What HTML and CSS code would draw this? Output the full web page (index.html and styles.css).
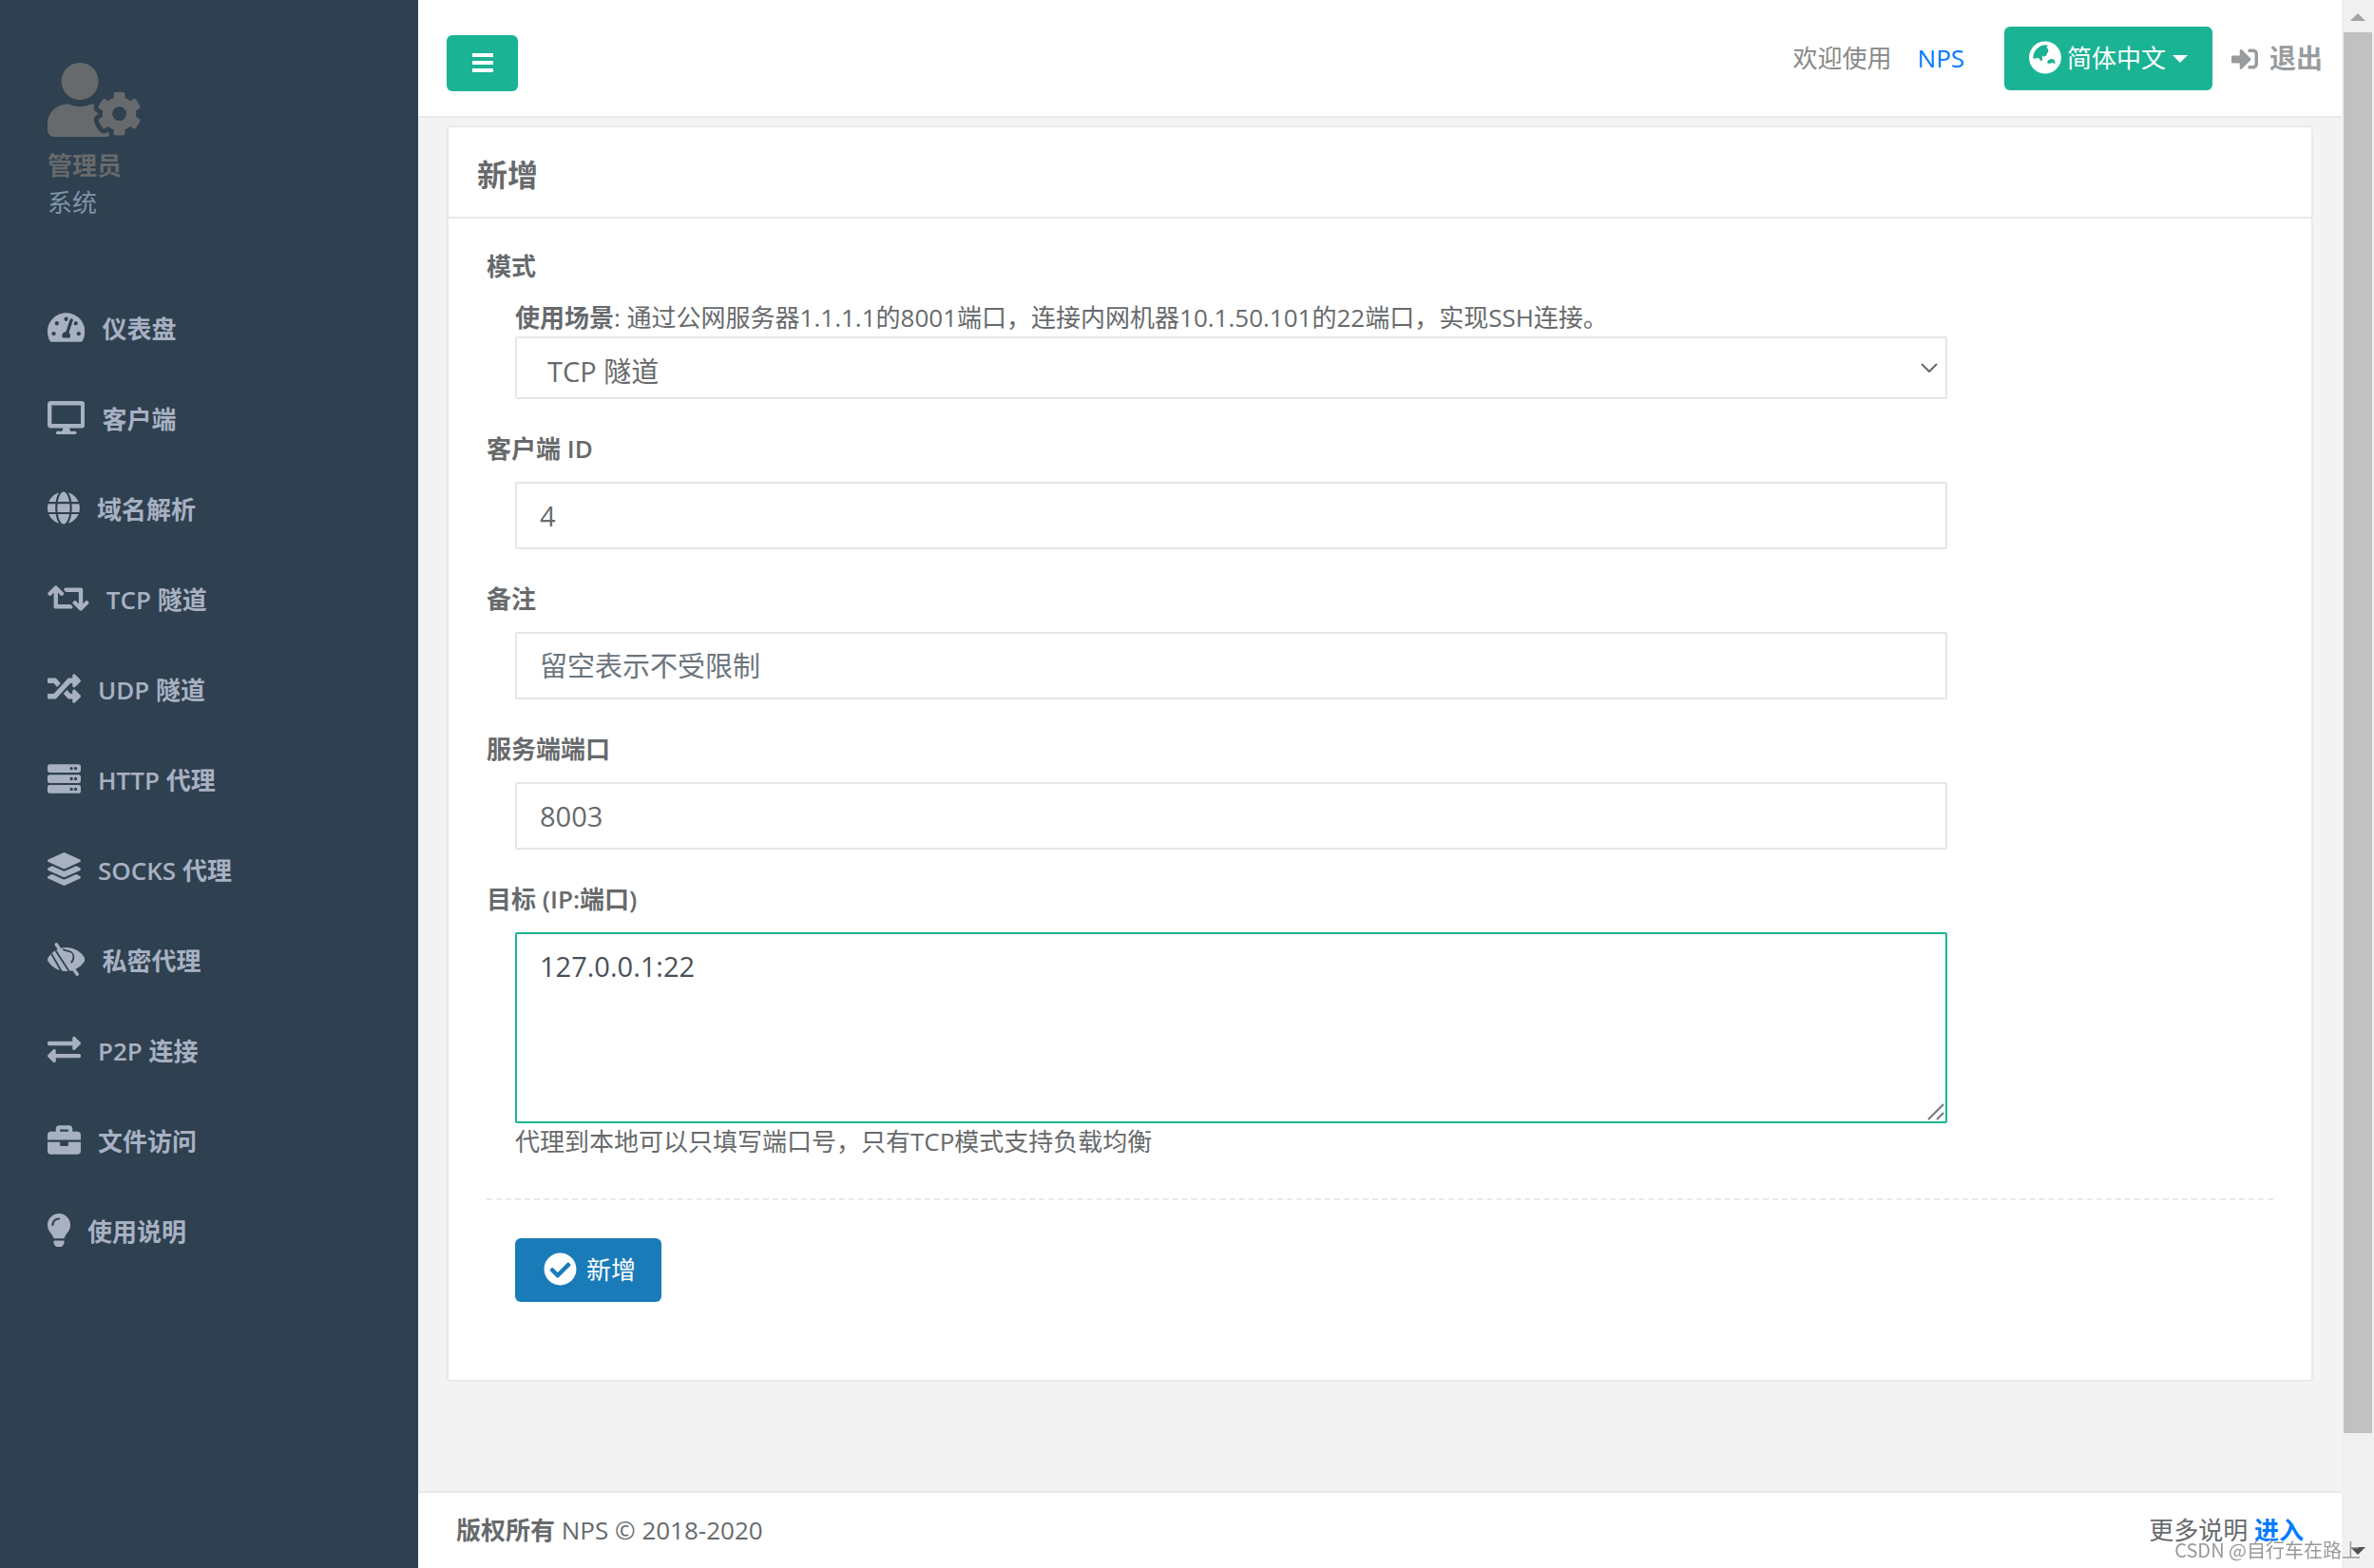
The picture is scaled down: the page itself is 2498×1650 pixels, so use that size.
FILE: index.html
```html
<!DOCTYPE html>
<html lang="zh-CN">
<head>
<meta charset="utf-8">
<meta name="viewport" content="width=device-width, initial-scale=1">
<title>NPS</title>
<link rel="stylesheet" href="styles.css">
</head>
<body>
<div class="app">
  <nav class="sidebar" aria-label="主菜单">
    <div class="profile">
      <svg class="avatar" viewBox="0 0 640 512" aria-hidden="true"><path d="M610.5 373.3c2.6-14.1 2.6-28.5 0-42.6l25.8-14.9c3-1.7 4.3-5.2 3.3-8.5-6.7-21.6-18.2-41.2-33.2-57.4-2.3-2.5-6-3.1-9-1.4l-25.8 14.9c-10.9-9.3-23.4-16.5-36.9-21.3v-29.8c0-3.4-2.4-6.4-5.7-7.1-22.3-5-45-4.8-66.2 0-3.3.7-5.7 3.7-5.7 7.1v29.8c-13.5 4.8-26 12-36.9 21.3l-25.8-14.9c-2.9-1.7-6.7-1.1-9 1.4-15 16.2-26.5 35.8-33.2 57.4-1 3.3.4 6.8 3.3 8.5l25.8 14.9c-2.6 14.1-2.6 28.5 0 42.6l-25.8 14.9c-3 1.7-4.3 5.2-3.3 8.5 6.7 21.6 18.2 41.1 33.2 57.4 2.3 2.5 6 3.1 9 1.4l25.8-14.9c10.9 9.3 23.4 16.5 36.9 21.3v29.8c0 3.4 2.4 6.4 5.7 7.1 22.3 5 45 4.8 66.2 0 3.3-.7 5.7-3.7 5.7-7.1v-29.8c13.5-4.8 26-12 36.9-21.3l25.8 14.9c2.9 1.7 6.7 1.1 9-1.4 15-16.2 26.5-35.8 33.2-57.4 1-3.3-.4-6.8-3.3-8.5l-25.8-14.9zM496 400.5c-26.8 0-48.5-21.8-48.5-48.5s21.8-48.5 48.5-48.5 48.5 21.8 48.5 48.5-21.7 48.5-48.5 48.5zM224 256c70.7 0 128-57.3 128-128S294.7 0 224 0 96 57.3 96 128s57.3 128 128 128zm201.2 226.5c-2.3-1.2-4.6-2.6-6.8-3.9l-7.9 4.6c-6 3.4-12.8 5.3-19.6 5.3-10.9 0-21.4-4.6-28.9-12.6-18.3-19.8-32.3-43.9-40.2-69.6-5.5-17.7 1.9-36.4 17.9-45.7l7.9-4.6c-.1-2.6-.1-5.2 0-7.8l-7.9-4.6c-16-9.2-23.4-28-17.9-45.7.9-2.9 2.2-5.8 3.2-8.7-3.8-.3-7.5-1.2-11.4-1.2h-16.7c-22.2 10.2-46.9 16-72.9 16s-50.6-5.8-72.9-16h-16.7C60.2 288 0 348.2 0 422.4V464c0 26.5 21.5 48 48 48h352c10.1 0 19.5-3.2 27.2-8.5-1.2-3.8-2-7.7-2-11.8v-9.2z"/></svg>
      <strong class="profile-name">管理员</strong>
      <span class="profile-role">系统</span>
    </div>
    <ul class="menu">
      <li><a href="#dashboard"><svg viewBox="0 0 576 512" aria-hidden="true"><path d="M288 32C128.94 32 0 160.94 0 320c0 52.8 14.25 102.26 39.06 144.8 5.61 9.62 16.3 15.2 27.44 15.2h443c11.14 0 21.83-5.58 27.44-15.2C561.75 422.26 576 372.8 576 320c0-159.06-128.94-288-288-288zm0 64c14.71 0 26.58 10.13 30.32 23.65-1.11 2.26-2.64 4.23-3.45 6.67l-9.22 27.67c-5.13 3.49-10.97 6.01-17.64 6.01-17.67 0-32-14.33-32-32S270.33 96 288 96zM96 384c-17.67 0-32-14.33-32-32s14.33-32 32-32 32 14.33 32 32-14.33 32-32 32zm48-160c-17.67 0-32-14.33-32-32s14.33-32 32-32 32 14.33 32 32-14.33 32-32 32zm246.77-72.41l-61.33 184C343.13 347.33 352 364.54 352 384c0 11.72-3.38 22.55-8.88 32H232.88c-5.5-9.45-8.88-20.28-8.88-32 0-33.94 26.5-61.43 59.9-63.59l61.34-184.01c4.17-12.56 17.73-19.45 30.36-15.17 12.57 4.19 19.35 17.79 15.17 30.36zm14.66 57.2l15.52-46.55c3.47-1.29 7.13-2.23 11.05-2.23 17.67 0 32 14.33 32 32s-14.33 32-32 32c-11.38-.01-20.89-6.28-26.57-15.22zM480 384c-17.67 0-32-14.33-32-32s14.33-32 32-32 32 14.33 32 32-14.33 32-32 32z"/></svg><span>仪表盘</span></a></li>
      <li><a href="#client"><svg viewBox="0 0 576 512" aria-hidden="true"><path d="M528 0H48C21.5 0 0 21.5 0 48v320c0 26.5 21.5 48 48 48h192l-16 48h-72c-13.3 0-24 10.7-24 24s10.7 24 24 24h272c13.3 0 24-10.7 24-24s-10.7-24-24-24h-72l-16-48h192c26.5 0 48-21.5 48-48V48c0-26.5-21.5-48-48-48zm-16 352H64V64h448v288z"/></svg><span>客户端</span></a></li>
      <li><a href="#host"><svg viewBox="0 0 496 512" aria-hidden="true"><path d="M336.5 160C322 70.7 287.8 8 248 8s-74 62.7-88.5 152h177zM152 256c0 22.2 1.2 43.5 3.3 64h185.3c2.1-20.5 3.3-41.8 3.3-64s-1.2-43.5-3.3-64H155.3c-2.1 20.5-3.3 41.8-3.3 64zm324.7-96c-28.6-67.9-86.5-120.4-158-141.6 24.4 33.8 41.2 84.7 50 141.6h108zM177.2 18.4C105.8 39.6 47.8 92.1 19.3 160h108c8.7-56.9 25.5-107.8 49.9-141.6zM487.4 192H372.7c2.1 21 3.3 42.5 3.3 64s-1.2 43-3.3 64h114.6c5.5-20.5 8.6-41.8 8.6-64s-3.1-43.5-8.5-64zM120 256c0-21.5 1.2-43 3.3-64H8.6C3.2 212.5 0 233.8 0 256s3.2 43.5 8.6 64h114.6c-2-21-3.2-42.5-3.2-64zm39.5 96c14.5 89.3 48.7 152 88.5 152s74-62.7 88.5-152h-177zm159.3 141.6c71.4-21.2 129.4-73.7 158-141.6h-108c-8.8 56.9-25.6 107.8-50 141.6zM19.3 352c28.6 67.9 86.5 120.4 158 141.6-24.4-33.8-41.2-84.7-50-141.6h-108z"/></svg><span>域名解析</span></a></li>
      <li><a href="#tcp"><svg viewBox="0 0 640 512" aria-hidden="true"><path d="M629.657 343.598L528.971 444.284c-9.373 9.372-24.568 9.372-33.941 0L394.343 343.598c-9.373-9.373-9.373-24.569 0-33.941l10.823-10.823c9.562-9.562 25.133-9.34 34.419.492L480 342.118V160H292.451a24.005 24.005 0 0 1-16.971-7.029l-16-16C244.361 121.851 255.069 96 276.451 96H520c13.255 0 24 10.745 24 24v222.118l40.416-42.792c9.285-9.831 24.856-10.054 34.419-.492l10.823 10.823c9.372 9.372 9.372 24.569-.001 33.941zm-265.138 15.431A23.999 23.999 0 0 0 347.548 352H160V169.881l40.416 42.792c9.286 9.831 24.856 10.054 34.419.491l10.822-10.822c9.373-9.373 9.373-24.569 0-33.941L144.971 67.716c-9.373-9.373-24.569-9.373-33.941 0L10.343 168.402c-9.373 9.373-9.373 24.569 0 33.941l10.822 10.822c9.562 9.562 25.133 9.34 34.419-.491L96 169.882V392c0 13.255 10.745 24 24 24h243.549c21.382 0 32.09-25.851 16.971-40.971l-16.001-16z"/></svg><span>TCP 隧道</span></a></li>
      <li><a href="#udp"><svg viewBox="0 0 512 512" aria-hidden="true"><path d="M504.971 359.029c9.373 9.373 9.373 24.569 0 33.941l-80 79.984c-15.01 15.01-40.971 4.49-40.971-16.971V416h-58.785a12.004 12.004 0 0 1-8.773-3.812l-70.556-75.596 53.333-57.143L352 336h32v-39.981c0-21.438 25.943-31.998 40.971-16.971l80 79.981zM12 176h84l52.781 56.551 53.333-57.143-70.556-75.596A11.999 11.999 0 0 0 122.785 96H12c-6.627 0-12 5.373-12 12v56c0 6.627 5.373 12 12 12zm372 0v39.984c0 21.46 25.961 31.98 40.971 16.971l80-79.984c9.373-9.373 9.373-24.569 0-33.941l-80-79.981C409.943 24.021 384 34.582 384 56.019V96h-58.785a12.004 12.004 0 0 0-8.773 3.812L96 336H12c-6.627 0-12 5.373-12 12v56c0 6.627 5.373 12 12 12h110.785c3.326 0 6.503-1.381 8.773-3.812L352 176h32z"/></svg><span>UDP 隧道</span></a></li>
      <li><a href="#http"><svg viewBox="0 0 512 512" aria-hidden="true"><path d="M480 160H32c-17.673 0-32-14.327-32-32V64c0-17.673 14.327-32 32-32h448c17.673 0 32 14.327 32 32v64c0 17.673-14.327 32-32 32zm-48-88c-13.255 0-24 10.745-24 24s10.745 24 24 24 24-10.745 24-24-10.745-24-24-24zm-64 0c-13.255 0-24 10.745-24 24s10.745 24 24 24 24-10.745 24-24-10.745-24-24-24zm112 248H32c-17.673 0-32-14.327-32-32v-64c0-17.673 14.327-32 32-32h448c17.673 0 32 14.327 32 32v64c0 17.673-14.327 32-32 32zm-48-88c-13.255 0-24 10.745-24 24s10.745 24 24 24 24-10.745 24-24-10.745-24-24-24zm-64 0c-13.255 0-24 10.745-24 24s10.745 24 24 24 24-10.745 24-24-10.745-24-24-24zm112 248H32c-17.673 0-32-14.327-32-32v-64c0-17.673 14.327-32 32-32h448c17.673 0 32 14.327 32 32v64c0 17.673-14.327 32-32 32zm-48-88c-13.255 0-24 10.745-24 24s10.745 24 24 24 24-10.745 24-24-10.745-24-24-24zm-64 0c-13.255 0-24 10.745-24 24s10.745 24 24 24 24-10.745 24-24-10.745-24-24-24z"/></svg><span>HTTP 代理</span></a></li>
      <li><a href="#socks"><svg viewBox="0 0 512 512" aria-hidden="true"><path d="M12.41 148.02l232.94 105.67c6.8 3.09 14.49 3.09 21.29 0l232.94-105.67c16.55-7.51 16.55-32.52 0-40.03L266.65 2.31a25.607 25.607 0 0 0-21.29 0L12.41 107.98c-16.55 7.51-16.55 32.53 0 40.04zm487.18 88.28l-58.09-26.33-161.64 73.27c-7.56 3.43-15.59 5.17-23.86 5.17s-16.29-1.74-23.86-5.17L70.51 209.97l-58.1 26.33c-16.55 7.5-16.55 32.5 0 40l232.94 105.59c6.8 3.08 14.49 3.08 21.29 0L499.59 276.3c16.55-7.5 16.55-32.5 0-40zm0 127.8l-57.87-26.23-161.86 73.37c-7.56 3.43-15.59 5.17-23.86 5.17s-16.29-1.74-23.86-5.17L70.29 337.87 12.41 364.1c-16.55 7.5-16.55 32.5 0 40l232.94 105.59c6.8 3.08 14.49 3.08 21.29 0L499.59 404.1c16.55-7.5 16.55-32.5 0-40z"/></svg><span>SOCKS 代理</span></a></li>
      <li><a href="#secret"><svg viewBox="0 0 576 512" aria-hidden="true"><path d="M6 238C70 132 170 72 288 72s225 60 282 160c8 15 8 33 0 48-58 100-164 160-282 160S64 380 6 280c-8-14-8-28 0-42z"/><g class="cut"><path d="M60 170l165 290M125 120l220 340M235 105c80 30 150 20 165 100 5 50-15 85-45 110"/></g><circle cx="342" cy="196" r="42"/><g class="bar"><path d="M135 26l322 460"/></g></svg><span>私密代理</span></a></li>
      <li><a href="#p2p"><svg viewBox="0 0 512 512" aria-hidden="true"><path d="M0 168v-16c0-13.255 10.745-24 24-24h360V80c0-21.367 25.899-32.042 40.971-16.971l80 80c9.372 9.373 9.372 24.569 0 33.941l-80 80C409.956 271.982 384 261.456 384 240v-48H24c-13.255 0-24-10.745-24-24zm488 152H128v-48c0-21.314-25.862-32.08-40.971-16.971l-80 80c-9.372 9.373-9.372 24.569 0 33.941l80 80C102.057 463.997 128 453.437 128 432v-48h360c13.255 0 24-10.745 24-24v-16c0-13.255-10.745-24-24-24z"/></svg><span>P2P 连接</span></a></li>
      <li><a href="#file"><svg viewBox="0 0 512 512" aria-hidden="true"><path d="M320 336c0 8.84-7.16 16-16 16h-96c-8.84 0-16-7.16-16-16v-48H0v144c0 25.6 22.4 48 48 48h416c25.6 0 48-22.4 48-48V288H320v48zm144-208h-80V80c0-25.6-22.4-48-48-48H176c-25.6 0-48 22.4-48 48v48H48c-25.6 0-48 22.4-48 48v80h512v-80c0-25.6-22.4-48-48-48zm-144 0H192V96h128v32z"/></svg><span>文件访问</span></a></li>
      <li><a href="#help"><svg viewBox="0 0 352 512" aria-hidden="true"><path d="M96.06 454.35c.01 6.29 1.87 12.45 5.36 17.69l17.09 25.69a31.99 31.99 0 0 0 26.64 14.28h61.71a31.99 31.99 0 0 0 26.64-14.28l17.09-25.69a31.989 31.989 0 0 0 5.36-17.69l.04-38.35H96.01l.05 38.35zM0 176c0 44.37 16.45 84.85 43.56 115.78 16.52 18.85 42.36 58.23 52.21 91.45.04.26.07.52.11.78h160.24c.04-.26.07-.51.11-.78 9.85-33.22 35.69-72.6 52.21-91.45C335.55 260.85 352 220.37 352 176 352 78.61 272.91-.3 175.45 0 73.44.31 0 82.97 0 176zm176-80c-44.11 0-80 35.89-80 80 0 8.84-7.16 16-16 16s-16-7.16-16-16c0-61.76 50.24-112 112-112 8.84 0 16 7.16 16 16s-7.16 16-16 16z"/></svg><span>使用说明</span></a></li>
    </ul>
  </nav>

  <div class="page">
    <header class="topbar">
      <button class="btn btn-toggle" type="button" aria-label="切换菜单"><svg viewBox="0 0 24 22" aria-hidden="true"><path d="M1 0h22v4H1zM1 8h22v4H1zM1 16h22v4H1z"/></svg></button>
      <div class="topbar-right">
        <span class="welcome">欢迎使用</span>
        <a class="brand" href="#nps">NPS</a>
        <button class="btn btn-lang" type="button">
          <svg class="globe" viewBox="0 0 496 512" aria-hidden="true"><path fill-rule="evenodd" d="M248 8a248 248 0 1 0 0 496 248 248 0 0 0 0-496zM64 254C66 160 140 76 240 62l40 2 12 16-18 8v22l18 10 6 42-20 30-16 40-32 12-10-18-20 22 8 36-16 26-22-12-14-28-20-10-24 16-10-16-20 24zM290 296l28-2 16-22 30 14 26 4 14 56-20 4-22-16-28 12-40 2-16-20 12-12z"/></svg>
          <span>简体中文</span><i class="caret"></i>
        </button>
        <a class="logout" href="#logout"><svg viewBox="0 0 512 512" aria-hidden="true"><path d="M416 448h-84c-6.600 0-12-5.400-12-12v-40c0-6.600 5.400-12 12-12h84c17.700 0 32-14.300 32-32V160c0-17.700-14.300-32-32-32h-84c-6.600 0-12-5.400-12-12V76c0-6.600 5.400-12 12-12h84c53 0 96 43 96 96v192c0 53-43 96-96 96zm-47-201L201 79c-15-15-41-4.500-41 17v96H24c-13.300 0-24 10.700-24 24v96c0 13.300 10.700 24 24 24h136v96c0 21.500 26 32 41 17l168-168c9.300-9.400 9.300-24.600 0-34z"/></svg><span>退出</span></a>
      </div>
    </header>

    <main class="content">
      <section class="card">
        <h1 class="card-title">新增</h1>
        <form class="form">
          <div class="group">
            <label for="mode">模式</label>
            <div class="field">
              <p class="hint"><b>使用场景</b>: 通过公网服务器1.1.1.1的8001端口，连接内网机器10.1.50.101的22端口，实现SSH连接。</p>
              <div class="stack">
                <select id="mode" class="control select"><option>TCP 隧道</option></select>
                <svg class="chevron" viewBox="0 0 18 10" aria-hidden="true"><path d="M1 1l8 8 8-8"/></svg>
              </div>
            </div>
          </div>
          <div class="group">
            <label for="client">客户端 ID</label>
            <div class="field"><input id="client" class="control" type="text" value="4"></div>
          </div>
          <div class="group">
            <label for="remark">备注</label>
            <div class="field"><input id="remark" class="control" type="text" placeholder="留空表示不受限制"></div>
          </div>
          <div class="group">
            <label for="port">服务端端口</label>
            <div class="field"><input id="port" class="control" type="text" value="8003"></div>
          </div>
          <div class="group">
            <label for="target">目标 (IP:端口)</label>
            <div class="field">
              <div class="stack">
                <textarea id="target" class="control area">127.0.0.1:22</textarea>
                <svg class="grip" viewBox="0 0 18 18" aria-hidden="true"><path d="M1 17L17 1M10 17l7-7"/></svg>
              </div>
              <p class="hint">代理到本地可以只填写端口号，只有TCP模式支持负载均衡</p>
            </div>
          </div>
          <hr class="divider">
          <div class="field">
            <button class="btn btn-submit" type="button"><svg class="check" viewBox="0 0 512 512" aria-hidden="true"><path d="M504 256c0 136.967-111.033 248-248 248S8 392.967 8 256 119.033 8 256 8s248 111.033 248 248zM227.314 387.314l184-184c6.248-6.248 6.248-16.379 0-22.627l-22.627-22.627c-6.248-6.249-16.379-6.249-22.628 0L216 308.118l-70.059-70.059c-6.248-6.248-16.379-6.248-22.628 0l-22.627 22.627c-6.248 6.248-6.248 16.379 0 22.627l104 104c6.249 6.249 16.379 6.249 22.628.001z"/></svg><span>新增</span></button>
          </div>
        </form>
      </section>
    </main>

    <footer class="footer">
      <span><b>版权所有</b> NPS © 2018-2020</span>
      <span>更多说明 <a href="#more">进入</a></span>
    </footer>
  </div>

  <div class="scrollbar" aria-hidden="true">
    <svg class="scroll-up" viewBox="0 0 16 8"><path d="M8 0l8 8H0z"/></svg>
    <div class="track"><div class="thumb"></div></div>
    <svg class="scroll-down" viewBox="0 0 16 8"><path d="M0 0h16L8 8z"/></svg>
  </div>
</div>
<div class="watermark">CSDN @自行车在路上</div>
</body>
</html>
```
FILE: styles.css
```css
* {
  box-sizing: border-box;
}

body {
  margin: 0;
  background: #f3f3f4;
  color: #676a6c;
  font-family: "Open Sans", "Noto Sans CJK SC", sans-serif;
  font-size: 26px;
  line-height: 39px;
}

a {
  color: #007bff;
  text-decoration: none;
}

svg {
  display: block;
  flex: none;
  fill: currentColor;
}

p {
  margin: 0;
}

.app {
  display: flex;
  min-height: 100vh;
}

/* Sidebar */
.sidebar {
  flex: none;
  width: 440px;
  background: #2f4050;
}

.profile {
  display: flex;
  flex-direction: column;
  align-items: flex-start;
  padding: 66px 50px;
}

.avatar {
  height: 78px;
  margin-bottom: 11px;
}

.profile-role {
  color: #8095a8;
}

.menu {
  margin: 0;
  padding: 0;
  list-style: none;
}

.menu a {
  display: flex;
  align-items: center;
  gap: 18px;
  padding: 28px 50px;
  color: #a7b1c2;
  font-weight: 600;
}

.menu svg {
  height: 35px;
  margin-bottom: 4px;
}

.cut,
.bar {
  fill: none;
  stroke: #2f4050;
  stroke-width: 26;
}

.bar {
  stroke: currentColor;
  stroke-width: 50;
  stroke-linecap: round;
}

/* Page column */
.page {
  display: flex;
  flex: 1;
  flex-direction: column;
  min-width: 0;
}

.topbar {
  display: flex;
  justify-content: space-between;
  align-items: flex-start;
  padding: 28px 20px 26px 30px;
  border-bottom: 2px solid #e7eaec;
  background: #fff;
}

.topbar-right {
  display: flex;
  align-items: center;
}

.welcome {
  color: #888;
}

.brand {
  margin: 0 42px 0 27px;
}

.btn {
  display: flex;
  align-items: center;
  justify-content: center;
  margin: 0;
  border: 0;
  border-radius: 6px;
  background: #1ab394;
  color: #fff;
  font: inherit;
}

.btn-toggle {
  width: 75px;
  height: 59px;
  margin-top: 9px;
}

.btn-toggle svg {
  width: 24px;
  height: 22px;
}

.btn-lang {
  height: 67px;
  padding: 0 26px;
}

.globe {
  height: 35px;
  margin: 0 6px 2px 0;
}

.check {
  height: 35px;
  margin: 0 10px 2px 0;
}

.caret {
  margin-left: 7px;
  border: 8px solid transparent;
  border-top-color: #fff;
  border-bottom: 0;
}

.logout {
  display: flex;
  align-items: center;
  gap: 12px;
  margin-left: 20px;
  color: #999c9e;
  font-size: 28px;
  font-weight: 600;
}

.logout svg {
  height: 28px;
}

.content {
  flex: 1;
  padding: 8px 30px 40px;
}

.card {
  border: 2px solid #e7eaec;
  border-radius: 4px;
  background: #fff;
}

.card-title {
  margin: 0;
  padding: 29px 30px 23px;
  border-bottom: 2px solid #e7eaec;
  font-size: 32px;
  font-weight: 600;
  line-height: 42px;
}

.form {
  padding: 31px 40px 82px;
}

.group {
  margin-bottom: 33px;
}

.group label {
  display: block;
  margin-bottom: 15px;
  font-weight: 600;
}

.field {
  width: 83.333%;
  padding: 0 30px;
}

.stack {
  display: grid;
}

.stack > * {
  grid-area: 1 / 1;
}

.control {
  display: block;
  width: 100%;
  height: 71px;
  margin: 0;
  padding: 12px 24px;
  border: 2px solid #e5e6e7;
  border-radius: 2px;
  outline: 0;
  background: #fff;
  color: #676a6c;
  font: inherit;
  font-size: 29px;
  line-height: 43px;
}

.control::placeholder {
  color: #6c757d;
  opacity: 1;
}

.select {
  height: 66px;
  padding: 14px 32px 6px;
  line-height: 42px;
  appearance: none;
}

.chevron {
  align-self: center;
  justify-self: end;
  width: 18px;
  margin-right: 10px;
  fill: none;
  stroke: #676a6c;
  stroke-width: 2;
  pointer-events: none;
}

.area {
  height: 201px;
  border-color: #1ab394;
  color: #495057;
  resize: none;
}

.grip {
  align-self: end;
  justify-self: end;
  width: 18px;
  margin: 3px;
  fill: none;
  stroke: #777;
  stroke-width: 2;
  pointer-events: none;
}

.divider {
  margin: 40px 0;
  border: 0;
  border-top: 2px dashed #e7eaec;
}

.btn-submit {
  height: 67px;
  padding: 0 27px 0 30px;
  background: #1a7bb9;
}

.footer {
  display: flex;
  justify-content: space-between;
  padding: 20px 40px;
  border-top: 2px solid #e7eaec;
  background: #fff;
}

.footer a {
  font-weight: 700;
}

/* Scroll rail */
.scrollbar {
  position: sticky;
  top: 0;
  display: flex;
  flex: none;
  flex-direction: column;
  align-items: center;
  width: 34px;
  height: 100vh;
  padding: 14px 0;
  background: #f0f0f0;
}

.scroll-up,
.scroll-down {
  width: 16px;
  height: 8px;
  color: #a3a3a3;
}

.scroll-down {
  color: #505050;
}

.track {
  flex: 1;
  align-self: stretch;
  margin: 12px 2px;
}

.thumb {
  height: 93.2%;
  background: #c1c1c1;
}

.watermark {
  position: fixed;
  right: 14px;
  bottom: 4px;
  color: #999;
  font-family: "Noto Sans CJK SC", sans-serif;
  font-size: 20px;
  line-height: 30px;
  text-shadow: -1px -1px 0 #fff;
}
```
